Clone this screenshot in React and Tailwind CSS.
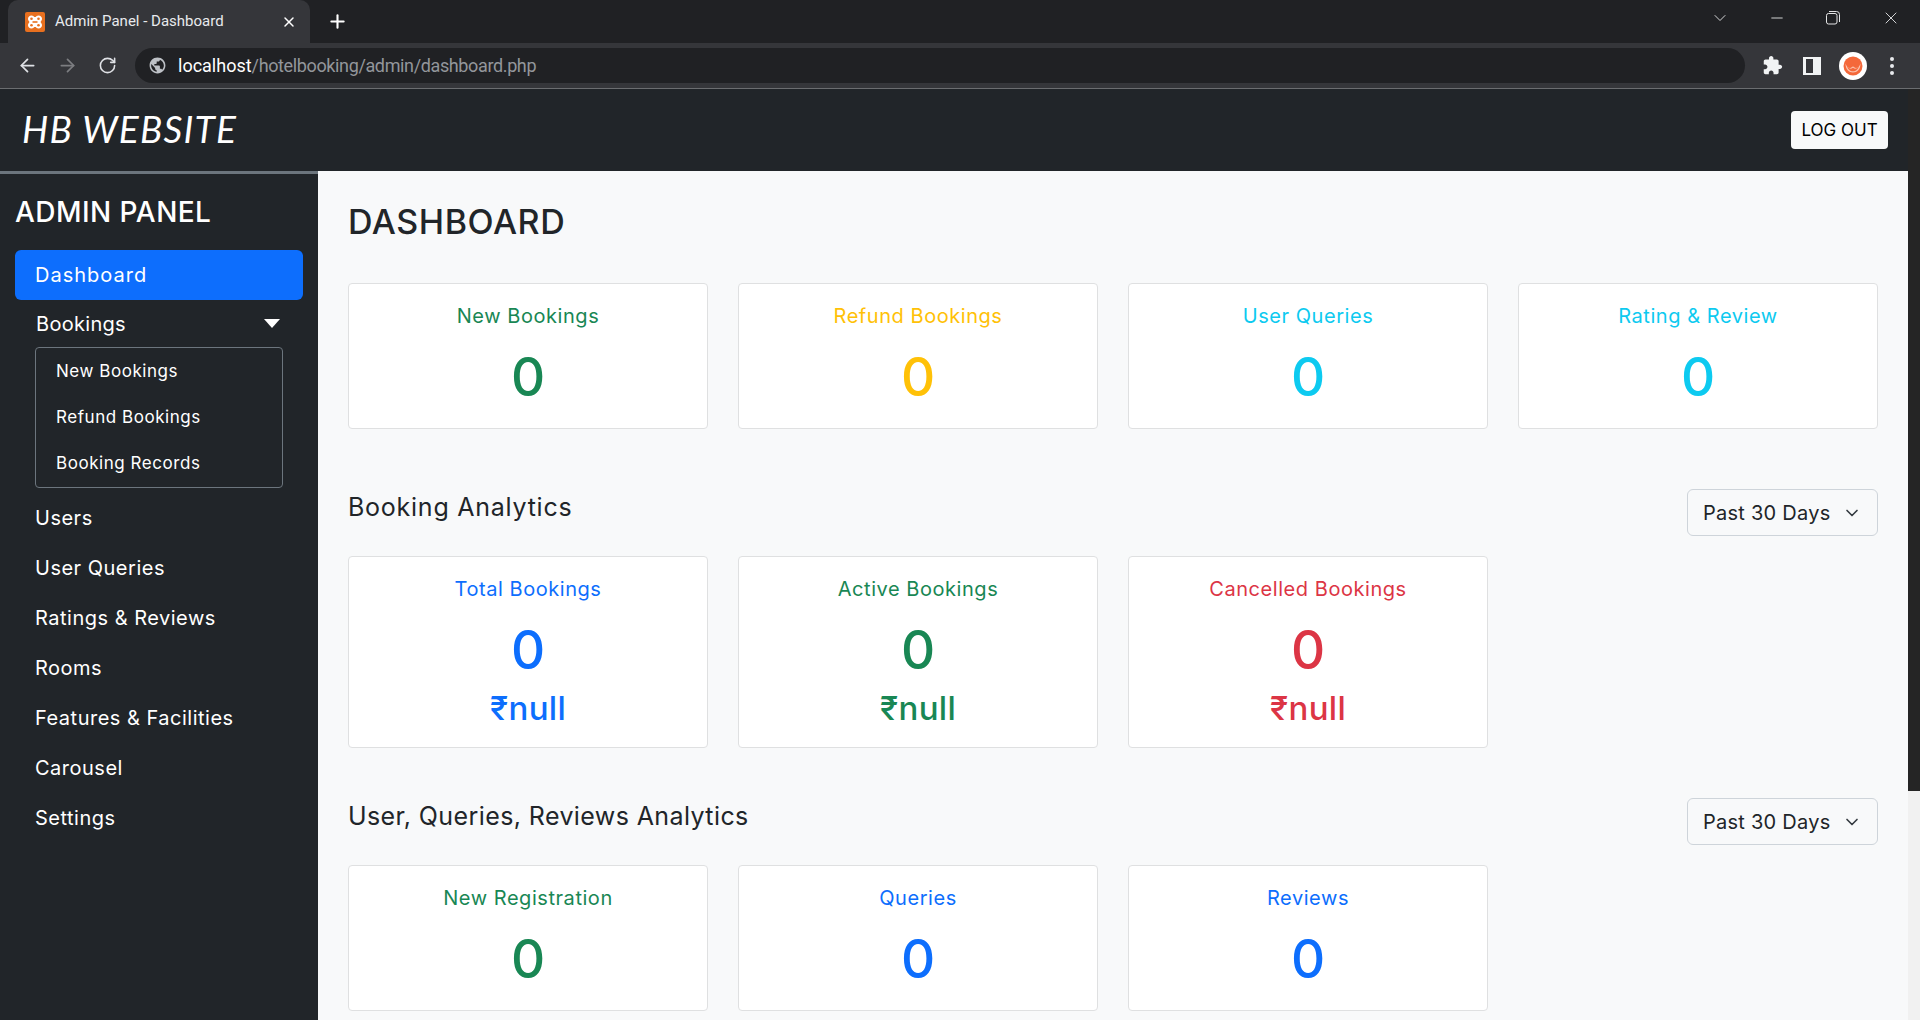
import React from 'react';
import { ArrowLeft, ArrowRight, RotateCw, ChevronDown, Plus, X, Minus } from 'lucide-react';

const sans = "font-['Inter','Liberation_Sans',sans-serif]";

const Stat = ({ title, color, amount }) => (
    <div className={`bg-white border border-[#dfe0e1] rounded-[4px] flex flex-col items-center pt-[16px] ${amount ? 'h-[192px]' : 'h-[146px]'}`}>
        <h6 className={`text-[20px] leading-[32px] tracking-[0.55px] ${color}`}>{title}</h6>
        <h1 className={`text-[53px] leading-[64px] font-medium mt-[13px] ${color}`}>0</h1>
        {amount && <h4 className={`text-[33px] leading-[36px] font-medium tracking-[0.3px] mt-[8px] ${color}`}>₹null</h4>}
    </div>
);

const SectionHead = ({ title, tracking }) => (
    <div className="flex items-center justify-between h-[47px]">
        <h5 className={`text-[25px] text-[#212529] -translate-y-[5px] ${tracking}`}>{title}</h5>
        <div className="w-[191px] h-[47px] border border-[#ced4da] rounded-[6px] flex items-center justify-between pl-[15px] pr-[15px] text-[20px] text-[#212529] tracking-[0.25px]">
            <span>Past 30 Days</span>
            <ChevronDown size={20} strokeWidth={2} className="text-[#343a40]" />
        </div>
    </div>
);

const NavItem = ({ children }) => (
    <div className="h-[50px] flex items-center pl-[20px] text-[20px] text-white tracking-[0.5px]">{children}</div>
);

const SubItem = ({ children }) => (
    <div className="h-[47px] flex items-center pl-[20px] text-[17px] text-white tracking-[0.55px]">{children}</div>
);

const BrowserBar = () => (
    <div className="bg-[#35363a] border-b border-[#6b6d70]">
        {/* tabs */}
        <div className="h-[43px] bg-[#202124] flex items-end pl-[8px]">
            <div className="w-[302px] h-[43px] bg-[#35363a] rounded-t-[10px] flex items-center pl-[17px] pr-[13px] font-['Roboto',sans-serif] text-[15px] text-[#e8eaed]">
                <svg width="20" height="20" viewBox="0 0 20 20" className="shrink-0">
                    <rect width="20" height="20" rx="2" fill="#e8701f" />
                    <path d="M6.500 3.500c1.500 0 2.200.8 2.800 1.500h1.400c.6-.7 1.300-1.500 2.800-1.500 2 0 3.500 1.500 3.500 3.300 0 1.400-.8 2.300-1.500 3.200.7.900 1.500 1.800 1.500 3.200 0 1.800-1.500 3.300-3.500 3.300-1.500 0-2.200-.8-2.800-1.500H9.300c-.6.700-1.300 1.500-2.800 1.500-2 0-3.500-1.500-3.500-3.300 0-1.400.8-2.300 1.500-3.200-.7-.9-1.500-1.800-1.500-3.200 0-1.800 1.500-3.300 3.500-3.300z" fill="#fff" />
                    <circle cx="6.500" cy="6.800" r="1.300" fill="#e8701f" />
                    <circle cx="13.500" cy="6.800" r="1.300" fill="#e8701f" />
                    <circle cx="6.500" cy="13.200" r="1.300" fill="#e8701f" />
                    <circle cx="13.500" cy="13.200" r="1.300" fill="#e8701f" />
                    <rect x="7.500" y="9.200" width="5" height="1.600" fill="#e8701f" />
                </svg>
                <span className="ml-[10px] flex-1">Admin Panel - Dashboard</span>
                <X size={16} strokeWidth={2.2} className="text-white" />
            </div>
            <Plus size={21} strokeWidth={2.4} className="text-white ml-[17px] mb-[11px]" />
            <div className="flex-1" />
            <div className="flex items-center h-[36px] self-start text-[#e4e5e6]">
                <ChevronDown size={20} strokeWidth={1.1} className="mr-[38px]" />
                <Minus size={18} strokeWidth={1.2} className="mr-[40px]" />
                <svg width="14" height="14" viewBox="0 0 14 14" fill="none" stroke="currentColor" className="mr-[41px]">
                    <rect x="0.5" y="2.5" width="10.5" height="10.500" rx="2" />
                    <path d="M3 .5h7.500a3 3 0 0 1 3 3V11" />
                </svg>
                <X size={20} strokeWidth={1.1} className="mr-[19px]" />
            </div>
        </div>
        {/* toolbar */}
        <div className="h-[45px] flex items-center text-[#dfe1e5]">
            <ArrowLeft size={21} strokeWidth={2} className="ml-[17px]" />
            <ArrowRight size={21} strokeWidth={2} className="ml-[19px] text-[#7c7d80]" />
            <RotateCw size={19} strokeWidth={2} className="ml-[20px]" />
            <div className="w-[1610px] h-[35px] ml-[18px] rounded-full bg-[#202124] flex items-center pl-[13px] font-['Roboto',sans-serif] text-[18px]">
                <svg width="19" height="19" viewBox="0 0 24 24" fill="#bdc1c6">
                    <path d="M12 2C6.48 2 2 6.48 2 12s4.48 10 10 10 10-4.48 10-10S17.52 2 12 2zm-1 17.93c-3.95-.49-7-3.85-7-7.93 0-.62.08-1.21.21-1.79L9 15v1c0 1.1.9 2 2 2v1.93zm6.9-2.54c-.26-.81-1-1.39-1.9-1.39h-1v-3c0-.55-.45-1-1-1H8v-2h2c.55 0 1-.45 1-1V7h2c1.1 0 2-.9 2-2v-.41c2.93 1.19 5 4.06 5 7.41 0 2.08-.8 3.97-2.1 5.39z" />
                </svg>
                <span className="ml-[11px] text-white">localhost</span>
                <span className="text-[#93969b] tracking-[-0.37px]">/hotelbooking/admin/dashboard.php</span>
            </div>
            <svg width="21" height="21" viewBox="0 0 24 24" fill="#f1f3f4" className="ml-[17px]">
                <path d="M20.5 11H19V7c0-1.1-.9-2-2-2h-4V3.5C13 2.12 11.88 1 10.5 1S8 2.12 8 3.5V5H4c-1.1 0-1.99.9-1.99 2v3.8H3.5c1.49 0 2.7 1.21 2.7 2.7s-1.21 2.7-2.7 2.7H2V20c0 1.1.9 2 2 2h3.8v-1.5c0-1.49 1.21-2.7 2.7-2.7 1.49 0 2.7 1.21 2.7 2.7V22H17c1.1 0 2-.9 2-2v-4h1.5c1.38 0 2.5-1.12 2.5-2.5S21.88 11 20.5 11z" />
            </svg>
            <div className="w-[18px] h-[18px] ml-[20px] border-[2px] border-[#f1f3f4] border-l-[3px] border-r-[8px] box-border" />
            <svg width="28" height="28" viewBox="0 0 28 28" className="ml-[18px]">
                <circle cx="14" cy="14" r="14" fill="#fff" />
                <circle cx="14" cy="14" r="9.5" fill="#f4683a" />
                <path d="M6.500 11.500c0 6 3.500 9 7.500 9s7.500-3 7.500-9c-1 3-3 4.500-4.500 4.500-1.500 0-2-1.500-3-1.500s-1.500 1.500-3 1.500-3.500-1.500-4.500-4.500z" fill="#fbc3ae" />
                <path d="M8 13.500c.5 3.800 3.200 5.800 6 5.800s5.500-2 6-5.800c-1 2-2.500 3.300-4 3.300-1 0-1.300-1-2-1s-1 1-2 1c-1.500 0-3-1.300-4-3.300z" fill="#f4683a" />
            </svg>
            <div className="flex flex-col gap-[3px] ml-[23px]">
                <span className="w-[4px] h-[4px] rounded-full bg-[#e8eaed]" />
                <span className="w-[4px] h-[4px] rounded-full bg-[#e8eaed]" />
                <span className="w-[4px] h-[4px] rounded-full bg-[#e8eaed]" />
            </div>
        </div>
    </div>
);

export default function App() {
    return (
        <div className={`h-[1020px] overflow-hidden flex flex-col ${sans}`}>
            <BrowserBar />
            <div className="flex-1 flex min-h-0">
                <div className="flex-1 flex flex-col min-w-0">
                    <header className="h-[82px] shrink-0 bg-[#212529] flex items-center justify-between pl-[22px] pr-[20px]">
                        <h3 className="font-['Lato',sans-serif] italic text-[37px] text-white tracking-[1.2px] -translate-y-[1px]">HB WEBSITE</h3>
                        <button className="w-[97px] h-[38px] bg-[#f8f9fa] rounded-[4px] text-[17px] pt-[1px] text-black">LOG OUT</button>
                    </header>
                    <div className="flex-1 flex min-h-0">
                        <aside className="w-[318px] shrink-0 bg-[#212529] border-t-[3px] border-[#6c757d] pl-[15px] pr-[15px]">
                            <h4 className="text-[28px] leading-[36px] text-white font-medium tracking-[0.45px] mt-[20px]">ADMIN PANEL</h4>
                            <div className="h-[50px] mt-[20px] bg-[#0d6efd] rounded-[6px] flex items-center pl-[20px] text-[20px] text-white tracking-[1px]">Dashboard</div>
                            <div className="h-[47px] flex items-center justify-between pl-[21px] pr-[23px] text-[20px] text-white tracking-[0.3px]">
                                <span>Bookings</span>
                                <span className="w-0 h-0 border-x-[8px] border-x-transparent border-t-[9px] border-t-white" />
                            </div>
                            <div className="ml-[20px] mr-[20px] h-[141px] pt-[1px] border border-[#6c757d] rounded-[4px] flex flex-col justify-center">
                                <SubItem>New Bookings</SubItem>
                                <SubItem>Refund Bookings</SubItem>
                                <SubItem>Booking Records</SubItem>
                            </div>
                            <div className="mt-[5px]">
                                <NavItem>Users</NavItem>
                                <NavItem>User Queries</NavItem>
                                <NavItem>Ratings &amp; Reviews</NavItem>
                                <NavItem>Rooms</NavItem>
                                <NavItem>Features &amp; Facilities</NavItem>
                                <NavItem>Carousel</NavItem>
                                <NavItem>Settings</NavItem>
                            </div>
                        </aside>
                        <main className="flex-1 bg-[#f8f9fa] px-[30px] min-w-0">
                            <h3 className="text-[34px] leading-[40px] text-[#212529] font-medium tracking-[0.55px] mt-[31px]">DASHBOARD</h3>
                            <div className="grid grid-cols-4 gap-[30px] mt-[41px]">
                                <Stat title="New Bookings" color="text-[#198754]" />
                                <Stat title="Refund Bookings" color="text-[#ffc107]" />
                                <Stat title="User Queries" color="text-[#0dcaf0]" />
                                <Stat title="Rating & Review" color="text-[#0dcaf0]" />
                            </div>
                            <div className="mt-[60px]"><SectionHead title="Booking Analytics" tracking="tracking-[0.75px]" /></div>
                            <div className="grid grid-cols-4 gap-[30px] mt-[20px]">
                                <Stat title="Total Bookings" color="text-[#0d6efd]" amount />
                                <Stat title="Active Bookings" color="text-[#198754]" amount />
                                <Stat title="Cancelled Bookings" color="text-[#dc3545]" amount />
                            </div>
                            <div className="mt-[50px]"><SectionHead title="User, Queries, Reviews Analytics" tracking="tracking-[0.4px]" /></div>
                            <div className="grid grid-cols-4 gap-[30px] mt-[20px]">
                                <Stat title="New Registration" color="text-[#198754]" />
                                <Stat title="Queries" color="text-[#0d6efd]" />
                                <Stat title="Reviews" color="text-[#0d6efd]" />
                            </div>
                        </main>
                    </div>
                </div>
                {/* page scrollbar */}
                <div className="w-[12px] shrink-0 bg-[#f1f1f1] flex flex-col">
                    <div className="h-[702px] bg-[#252525]" />
                </div>
            </div>
        </div>
    );
}
